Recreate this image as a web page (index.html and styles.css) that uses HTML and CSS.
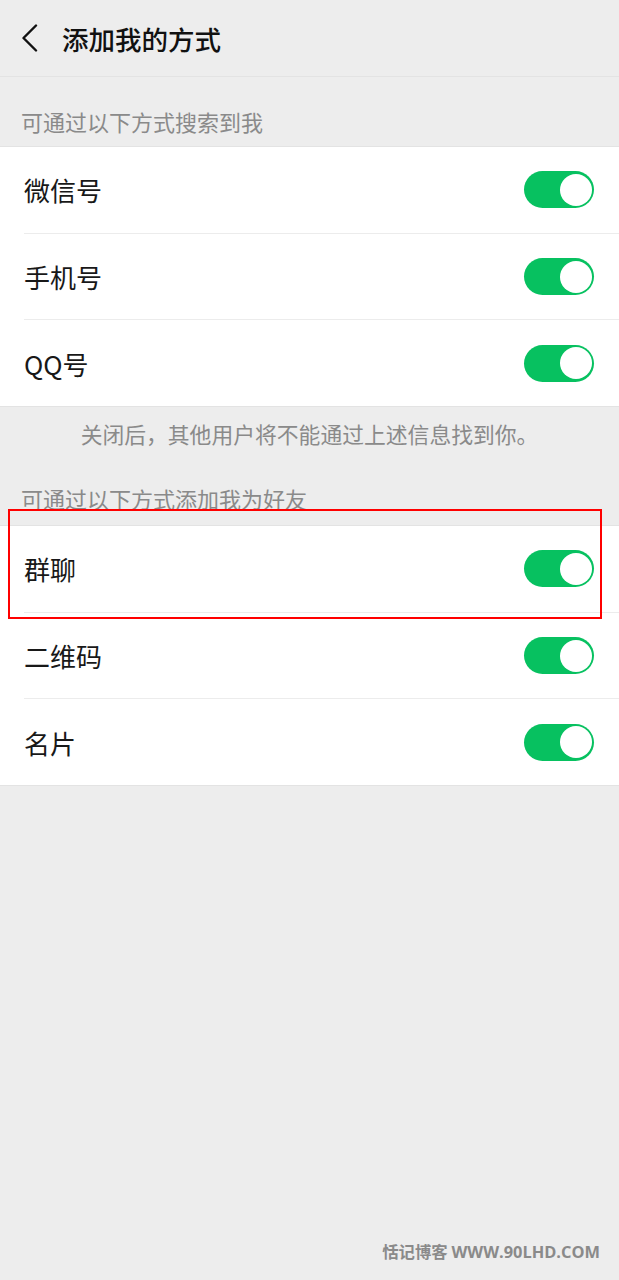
FILE: index.html
```
<!DOCTYPE html>
<html lang="zh-CN">
<head>
  <meta charset="UTF-8" />
  <meta name="viewport" content="width=device-width, initial-scale=1" />
  <title>添加我的方式</title>
  <link rel="stylesheet" href="styles.css">
</head>
<body>
  <div class="header">
    <svg class="back" width="18" height="28" viewBox="0 0 18 28">
      <polyline points="15,1.5 2.5,14 15,26.5" fill="none" stroke="#111" stroke-width="2.4" stroke-linecap="round" stroke-linejoin="round" />
    </svg>
    <h1>添加我的方式</h1>
  </div>

  <div class="label first">可通过以下方式搜索到我</div>
  <div class="group">
    <div class="item"><span>微信号</span><span class="switch"></span></div>
    <div class="item"><span>手机号</span><span class="switch"></span></div>
    <div class="item"><span>QQ号</span><span class="switch"></span></div>
  </div>
  <p class="note">关闭后，其他用户将不能通过上述信息找到你。</p>

  <div class="label second">可通过以下方式添加我为好友</div>
  <div class="group">
    <div class="item"><span>群聊</span><span class="switch"></span></div>
    <div class="item"><span>二维码</span><span class="switch"></span></div>
    <div class="item"><span>名片</span><span class="switch"></span></div>
  </div>

  <!-- annotation box drawn over the screenshot -->
  <div class="mark"></div>
  <div class="watermark">恬记博客 <span>WWW.90LHD.COM</span></div>
</body>
</html>
```

FILE: styles.css
```
html {
  background: #ededed;
}
body {
  margin: 0;
  min-height: 1280px;
  position: relative;
  background: #ededed;
  font-family: "Noto Sans CJK SC", sans-serif;
  color: #111;
}
.header {
  height: 76px;
  display: flex;
  align-items: center;
  border-bottom: 1px solid #e3e3e3;
}
.back {
  margin-left: 21px;
  margin-right: 23px;
}
h1 {
  margin: 0;
  font-size: 26.5px;
  font-weight: 500;
  color: #111;
}
.label {
  padding: 30px 21px 11px;
  font-size: 22px;
  line-height: 28px;
  color: #8a8a8a;
}
.label.second {
  padding-top: 36px;
  padding-bottom: 13px;
}
.group {
  background: #fff;
  border-top: 1px solid #e3e3e3;
  border-bottom: 1px solid #e3e3e3;
}
.item {
  height: 85.7px;
  margin-left: 24px;
  padding-right: 25px;
  display: flex;
  align-items: center;
  justify-content: space-between;
  font-size: 26px;
  color: #181818;
}
.item + .item {
  border-top: 1px solid #ececec;
}
.switch {
  width: 70px;
  height: 37px;
  box-sizing: border-box;
  padding: 2.5px;
  border-radius: 19px;
  background: #07c160;
  display: flex;
  justify-content: flex-end;
}
.switch::after {
  content: "";
  width: 32px;
  height: 32px;
  border-radius: 50%;
  background: #fff;
}
.note {
  margin: 0;
  padding-top: 13px;
  text-align: center;
  font-size: 21.8px;
  line-height: 28px;
  color: #8a8a8a;
}
.mark {
  position: absolute;
  left: 8px;
  top: 509px;
  width: 590px;
  height: 106px;
  border: 2px solid #f00;
}
.watermark {
  position: absolute;
  right: 19px;
  top: 1239px;
  font-size: 16.4px;
  font-weight: 700;
  color: #8a8a8a;
}
.watermark span {
  font-family: "Open Sans", sans-serif;
}
```
